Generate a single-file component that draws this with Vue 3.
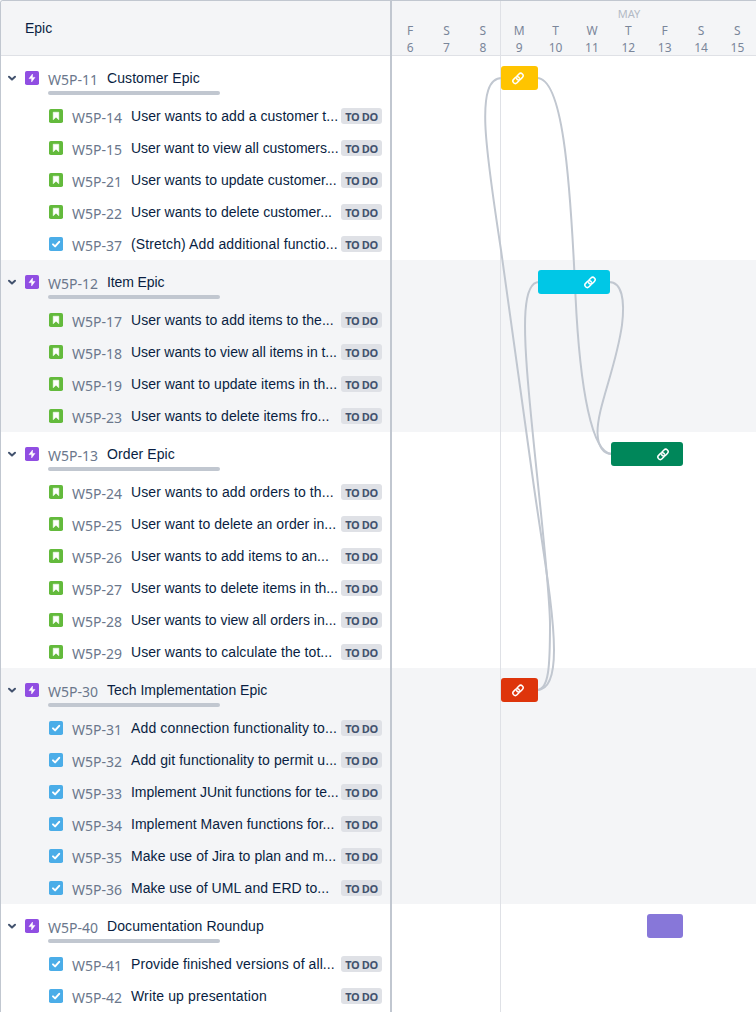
<script setup>
const days = [['F', 6], ['S', 7], ['S', 8], ['M', 9], ['T', 10], ['W', 11], ['T', 12], ['F', 13], ['S', 14], ['S', 15]]

// The last number of each entry is the extra width of the title, in pixels.
const groups = [
  {
    id: 'W5P-11', title: 'Customer Epic', extra: 1, bar: 'yellow', linked: true,
    items: [
      ['W5P-14', 'User wants to add a customer t...', 'story', 1.7],
      ['W5P-15', 'User want to view all customers...', 'story', -1],
      ['W5P-21', 'User wants to update customer...', 'story', 1],
      ['W5P-22', 'User wants to delete customer...', 'story', 1],
      ['W5P-37', '(Stretch) Add additional functio...', 'task', 4.5],
    ],
  },
  {
    id: 'W5P-12', title: 'Item Epic', extra: -1, bar: 'cyan', linked: true,
    items: [
      ['W5P-17', 'User wants to add items to the...', 'story', 2],
      ['W5P-18', 'User wants to view all items in t...', 'story', -1],
      ['W5P-19', 'User want to update items in th...', 'story', 1.5],
      ['W5P-23', 'User wants to delete items fro...', 'story', 1.5],
    ],
  },
  {
    id: 'W5P-13', title: 'Order Epic', extra: 1, bar: 'green', linked: true,
    items: [
      ['W5P-24', 'User wants to add orders to th...', 'story', 3.5],
      ['W5P-25', 'User want to delete an order in...', 'story', 2],
      ['W5P-26', 'User wants to add items to an...', 'story', 1],
      ['W5P-27', 'User wants to delete items in th...', 'story', 0],
      ['W5P-28', 'User wants to view all orders in...', 'story', 0],
      ['W5P-29', 'User wants to calculate the tot...', 'story', 2],
    ],
  },
  {
    id: 'W5P-30', title: 'Tech Implementation Epic', extra: 0, bar: 'red', linked: true,
    items: [
      ['W5P-31', 'Add connection functionality to...', 'task', 4.5],
      ['W5P-32', 'Add git functionality to permit u...', 'task', 3],
      ['W5P-33', 'Implement JUnit functions for te...', 'task', -1],
      ['W5P-34', 'Implement Maven functions for...', 'task', 1],
      ['W5P-35', 'Make use of Jira to plan and m...', 'task', 2],
      ['W5P-36', 'Make use of UML and ERD to...', 'task', 1],
    ],
  },
  {
    id: 'W5P-40', title: 'Documentation Roundup', extra: 2, bar: 'purple', linked: false,
    items: [
      ['W5P-41', 'Provide finished versions of all...', 'task', 3],
      ['W5P-42', 'Write up presentation', 'task', 3],
    ],
  },
]

const tracking = (text, extra) => ({ letterSpacing: (extra / text.length).toFixed(3) + 'px' })
</script>

<template>
  <div class="roadmap">
    <section class="list">
      <header class="list-head">Epic</header>
      <div v-for="g in groups" :key="g.id" class="group">
        <div class="epic">
          <svg class="chevron" width="10" height="8" viewBox="0 0 10 8"><path d="M2 2.8L5 5.6L8 2.8" fill="none" stroke="#42526e" stroke-width="2" stroke-linecap="round" stroke-linejoin="round" /></svg>
          <svg class="icon" width="14" height="14" viewBox="0 0 14 14">
            <rect width="14" height="14" rx="1.8" fill="#904ee2" />
            <path d="M7.5 3L4 7.6H6.6V11L10 6.4H7.5Z" fill="#fff" stroke="#fff" stroke-width=".5" stroke-linejoin="round" />
          </svg>
          <span class="key">{{ g.id }}</span>
          <span class="title" :style="tracking(g.title, g.extra)">{{ g.title }}</span>
          <div class="progress"></div>
        </div>
        <div v-for="[id, title, type, extra] in g.items" :key="id" class="child">
          <svg class="icon" width="14" height="14" viewBox="0 0 14 14">
            <template v-if="type === 'story'">
              <rect width="14" height="14" rx="1.8" fill="#63ba3c" />
              <path d="M4.2 3.2H9.8V10.8L7 8.2L4.2 10.8Z" fill="#fff" stroke="#fff" stroke-width=".5" stroke-linejoin="round" />
            </template>
            <template v-else>
              <rect width="14" height="14" rx="1.8" fill="#4bade8" />
              <path d="M4 7.4L6.1 9.4L10.2 4.8" fill="none" stroke="#fff" stroke-width="2" stroke-linecap="round" stroke-linejoin="round" />
            </template>
          </svg>
          <span class="key">{{ id }}</span>
          <span class="title" :style="tracking(title, extra)">{{ title }}</span>
          <span class="status">TO DO</span>
        </div>
      </div>
    </section>

    <section class="timeline">
      <header class="time-head">
        <div class="month">MAY</div>
        <div class="days">
          <div v-for="[d, n] in days" :key="n" class="day"><span>{{ d }}</span><span>{{ n }}</span></div>
        </div>
      </header>
      <div v-for="g in groups" :key="g.id" class="group">
        <div class="lane">
          <div class="bar" :class="g.bar">
            <svg v-if="g.linked" width="14" height="14" viewBox="0 0 14 14" fill="none" stroke="#fff" stroke-width="1.5" stroke-linecap="round">
              <g transform="translate(0 .4) rotate(-45 7 7)">
                <path d="M6 9.4H3.2A2.4 2.4 0 0 1 3.2 4.6H6A2.4 2.4 0 0 1 8.2 7.8" />
                <path d="M8 4.6H10.8A2.4 2.4 0 0 1 10.8 9.4H8A2.4 2.4 0 0 1 5.8 6.2" />
              </g>
            </svg>
          </div>
        </div>
        <div v-for="item in g.items" :key="item[0]" class="spacer"></div>
      </div>
      <div class="week-line"></div>
      <svg class="links" width="364" height="1012" viewBox="392 0 364 1012" fill="none" stroke="#c1c7d0" stroke-width="2">
        <path d="M502 78C475 78 485 146 501 250L533 480C542 545 554 610 554 650C554 680 547 690 537 690" />
        <path d="M537 78C562 78 570 170 575.5 296C580 390 592 454 612 454" />
        <path d="M609 282C622 282 625 300 622 325C616 368 597 408 597.5 433C598 446 603 454 612 454" />
        <path d="M539 282C522 282 524 330 527 370C533 450 550 580 550 625C550 665 549 690 537 690" />
      </svg>
    </section>
  </div>
</template>

<style>
body { margin: 0; overflow: hidden; background: #fff; }
</style>

<style scoped>
* { box-sizing: border-box; }
.roadmap { display: flex; width: 756px; height: 1012px; overflow: hidden; border: 1px solid #c1c7d0; border-width: 1px 0 0 1px; border-top-left-radius: 3px; font-family: "Liberation Sans", Arial, sans-serif; color: #091e42; }
.list { width: 391px; height: 1100px; flex: none; border-right: 2px solid #c1c7d0; }
.list-head { height: 55px; padding-left: 24px; line-height: 54px; font-size: 14px; background: #f4f5f7; border-bottom: 1px solid #dfe1e6; }
.group:nth-of-type(even) { background: #f4f5f7; }
.epic { display: grid; grid-template-columns: 10px 14px 52px 1fr; column-gap: 8px; height: 44px; padding: 13px 0 0 6px; grid-template-rows: 18px 8px; align-items: center; }
.epic .key { margin-left: 1px; }
.progress { grid-column: 3 / 5; width: 172px; height: 4px; margin-left: 1px; align-self: end; border-radius: 2px; background: #c1c7d0; }
.child { display: flex; align-items: center; height: 32px; padding-left: 48px; }
.icon { display: block; flex: none; }
.key { font-family: "Noto Sans", sans-serif; font-size: 14px; line-height: 18px; color: #6b778c; position: relative; top: 2px; white-space: nowrap; }
.child .key { padding-left: 9px; box-sizing: content-box; width: 50px; }
.title { font-size: 14px; line-height: 18px; white-space: nowrap; }
.child .title { width: 210px; margin-left: 9px; }
.status { width: 41px; height: 16px; flex: none; border-radius: 3px; background: #dfe1e6; color: #42526e; font: 700 11px/17px "Noto Sans", sans-serif; letter-spacing: -.35px; text-align: center; white-space: nowrap; }
.timeline { position: relative; flex: 1; height: 1100px; border-right: 1px solid #dfe1e6; }
.time-head { height: 55px; padding-top: 5px; background: #f4f5f7; border-bottom: 1px solid #dfe1e6; font-family: "Noto Sans", sans-serif; font-size: 12px; color: #7a869a; }
.month { width: 254px; margin-left: 110px; text-align: center; font-size: 11px; line-height: 16px; color: #b3bac5; }
.days { display: grid; grid-template-columns: repeat(10, 36.36px); }
.day { display: flex; flex-direction: column; align-items: center; line-height: 17px; }
.lane { display: grid; grid-template-columns: repeat(10, 36.36px); height: 44px; align-items: center; }
.bar { position: relative; z-index: 2; display: flex; align-items: center; justify-content: flex-end; height: 24px; margin: 0 -.3px 0 .4px; padding-right: 13px; border-radius: 3px; }
.yellow { grid-column: 4 / 5; background: #ffc400; }
.cyan { grid-column: 5 / 7; background: #00c7e6; }
.green { grid-column: 7 / 9; background: #00875a; }
.red { grid-column: 4 / 5; background: #de350b; }
.purple { grid-column: 8 / 9; background: #8777d9; }
.spacer { height: 32px; }
.week-line { position: absolute; left: 108px; top: 0; width: 1px; height: 1100px; background: #dfe1e6; }
.links { position: absolute; left: 0; top: -1px; z-index: 1; }
</style>
